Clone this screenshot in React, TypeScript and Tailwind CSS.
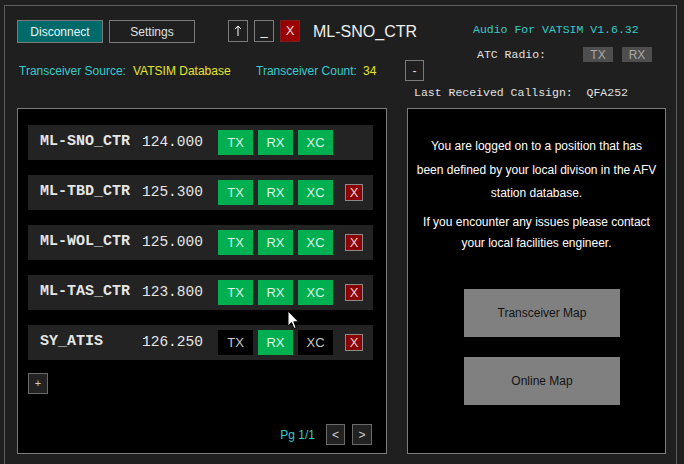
import React from "react";

type Station = {
  callsign: string;
  freq: string;
  tx: boolean;
  rx: boolean;
  xc: boolean;
  removable: boolean;
};

const stations: Station[] = [
  { callsign: "ML-SNO_CTR", freq: "124.000", tx: true, rx: true, xc: true, removable: false },
  { callsign: "ML-TBD_CTR", freq: "125.300", tx: true, rx: true, xc: true, removable: true },
  { callsign: "ML-WOL_CTR", freq: "125.000", tx: true, rx: true, xc: true, removable: true },
  { callsign: "ML-TAS_CTR", freq: "123.800", tx: true, rx: true, xc: true, removable: true },
  { callsign: "SY_ATIS", freq: "126.250", tx: false, rx: true, xc: false, removable: true },
];

const sans = { fontFamily: '"Liberation Sans", Arial, sans-serif' };
const mono = { fontFamily: '"Liberation Mono", "Courier New", monospace' };

function Toggle({ label, on }: { label: string; on: boolean }) {
  return (
    <div
      className={
        "flex h-[25px] w-[35px] items-center justify-center text-[13px] " +
        (on ? "bg-[#00b050] text-[#dff5e8]" : "bg-black text-[#c8c8c8]")
      }
    >
      {label}
    </div>
  );
}

function StationRow({ s }: { s: Station }) {
  return (
    <div className="flex h-[35px] w-[345px] shrink-0 items-center bg-[#232323]">
      <span style={mono} className="w-[114px] pl-[12px] text-[15px] font-bold text-[#e6e6e6]">
        {s.callsign}
      </span>
      <span style={mono} className="w-[76px] text-[14.5px] text-[#e6e6e6]">
        {s.freq}
      </span>
      <div className="flex gap-[5px]">
        <Toggle label="TX" on={s.tx} />
        <Toggle label="RX" on={s.rx} />
        <Toggle label="XC" on={s.xc} />
      </div>
      {s.removable && (
        <div className="ml-[12px] flex h-[17px] w-[18px] items-center justify-center border border-[#8a8a8a] bg-[#8b0000] text-[13px] leading-none text-[#f0d0d0]">
          X
        </div>
      )}
    </div>
  );
}

export default function App() {
  return (
    <div style={sans} className="relative h-[464px] w-[684px] overflow-hidden bg-[#1f1f1f] pl-[4px] pt-[5px]">
      <div className="h-[470px] w-[673px] border border-[#5e5e5e]">
        {/* header */}
        <div className="h-[102px] pl-[12px]">
          <div className="flex">
            <div className="flex w-[407px] flex-col pt-[14px]">
              <div className="flex items-start">
                <button className="h-[23px] w-[86px] border border-[#7a7a7a] bg-[#006a6a] text-[12px] text-[#e8f4f4]">
                  Disconnect
                </button>
                <button className="ml-[6px] h-[23px] w-[86px] border border-[#7a7a7a] text-[12px] text-[#e0e0e0]">
                  Settings
                </button>
                <button className="ml-[33px] flex h-[22px] w-[20px] items-center justify-center border border-[#7a7a7a]">
                  <svg width="8" height="12" viewBox="0 0 8 12">
                    <path d="M4 1 V11 M1 4 L4 1 L7 4" fill="none" stroke="white" strokeWidth="1" />
                  </svg>
                </button>
                <button className="ml-[6px] h-[22px] w-[20px] border border-[#7a7a7a] text-[13px] text-white">
                  _
                </button>
                <button className="ml-[6px] h-[22px] w-[20px] border border-[#7a2020] bg-[#9b0000] text-[13px] text-[#f4d8d8]">
                  X
                </button>
                <span className="ml-[13px] text-[16px] leading-[23px] text-[#f0f0f0]">ML-SNO_CTR</span>
              </div>
              <div className="mt-[17px] flex h-[21px] items-center pl-[2px] text-[12px]">
                <span className="w-[114px] text-[#36cccc]">Transceiver Source:</span>
                <span className="w-[123px] text-[#e6e62e]">VATSIM Database</span>
                <span className="w-[107px] text-[#36cccc]">Transceiver Count:</span>
                <span className="w-[42px] text-[#e6e62e]">34</span>
                <button className="h-[21px] w-[19px] border border-[#7a7a7a] text-[12px] text-[#e0e0e0]">
                  -
                </button>
              </div>
            </div>
            <div style={mono} className="ml-[49px] flex flex-col pt-[17px] text-[11.5px]">
              <span className="leading-[14px] text-[#36cccc]">Audio For VATSIM V1.6.32</span>
              <div className="mt-[10px] flex h-[15px] items-center">
                <span className="w-[110px] pl-[4px] text-[#e0e0e0]">ATC Radio:</span>
                <span style={sans} className="flex h-[15px] w-[30px] items-center justify-center bg-[#4e4e4e] text-[12px] text-[#a8a8a8]">
                  TX
                </span>
                <span style={sans} className="ml-[9px] flex h-[15px] w-[30px] items-center justify-center bg-[#4e4e4e] text-[12px] text-[#a8a8a8]">
                  RX
                </span>
              </div>
            </div>
          </div>
          <div style={mono} className="ml-[397px] mt-[5px] whitespace-pre text-[11.5px] leading-[14px] text-[#e0e0e0]">
            {"Last Received Callsign:  QFA252"}
          </div>
        </div>

        {/* panels */}
        <div className="flex pl-[12px]">
          <div className="flex h-[346px] w-[370px] flex-col border border-[#7c7c7c] bg-black pl-[10px] pr-[14px] pt-[16px]">
            <div className="flex flex-col gap-[15px]">
              {stations.map((s) => (
                <StationRow key={s.callsign} s={s} />
              ))}
            </div>
            <button className="mt-[13px] flex h-[21px] w-[20px] items-center justify-center border border-[#6a6a6a] bg-[#222] text-[11px] text-[#d0d0d0]">
              +
            </button>
            <div className="mb-[8px] mt-auto flex items-center justify-end">
              <span className="mr-[11px] text-[12px] text-[#36cccc]">Pg 1/1</span>
              <button className="h-[21px] w-[19px] border border-[#6a6a6a] bg-[#222] text-[12px] text-[#d0d0d0]">
                &lt;
              </button>
              <button className="ml-[7px] h-[21px] w-[20px] border border-[#6a6a6a] bg-[#222] text-[12px] text-[#d0d0d0]">
                &gt;
              </button>
            </div>
          </div>

          <div className="ml-[20px] flex h-[346px] w-[259px] flex-col border border-[#7c7c7c] bg-black pt-[26px] text-center text-[12px] text-white">
            <p className="whitespace-nowrap leading-[23.5px]">
              You are logged on to a position that has
              <br />
              been defined by your local divison in the AFV
              <br />
              station database.
            </p>
            <p className="mt-[6px] whitespace-nowrap leading-[21px]">
              If you encounter any issues please contact
              <br />
              your local facilities engineer.
            </p>
            <button className="ml-[56px] mt-[35px] h-[48px] w-[156px] bg-[#808080] text-[12px] text-[#141414]">
              Transceiver Map
            </button>
            <button className="ml-[56px] mt-[20px] h-[48px] w-[156px] bg-[#808080] text-[12px] text-[#141414]">
              Online Map
            </button>
          </div>
        </div>
      </div>

      {/* mouse pointer */}
      <svg className="absolute left-[287px] top-[310px]" width="13" height="20" viewBox="0 0 13 20">
        <path d="M1 1 L1 16 L4.5 12.5 L7 18.5 L9.2 17.6 L6.8 11.8 L11.5 11.8 Z" fill="white" stroke="black" strokeWidth="1" />
      </svg>
    </div>
  );
}
